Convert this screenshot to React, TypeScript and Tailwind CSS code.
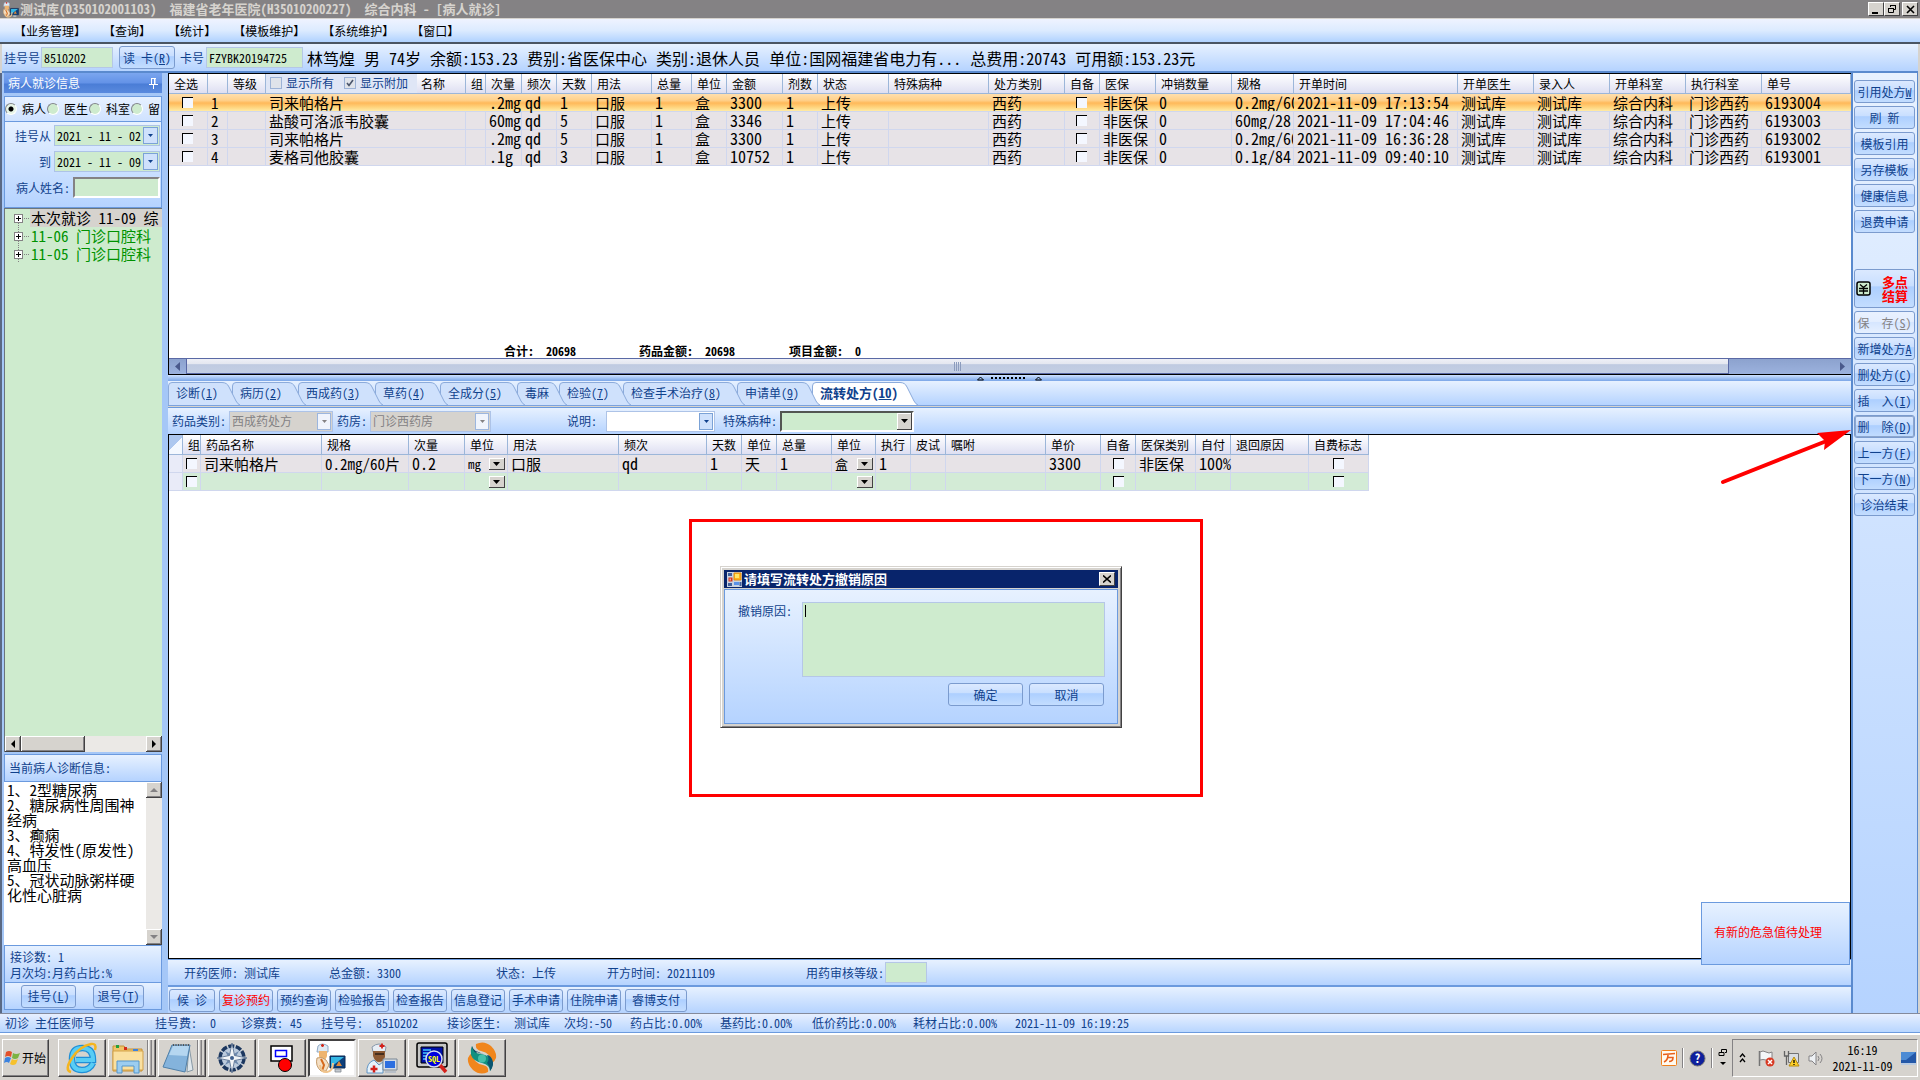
import type { ReactNode } from "react";

interface Column {
  label: string;
  width: number;
  wide?: boolean;
}

interface Tab {
  label: string;
  hotkey?: string;
  width: number;
}

const menus = ["业务管理", "查询", "统计", "模板维护", "系统维护", "窗口"];

const patientInfo = [
  "林笃煌",
  "男",
  "74岁",
  "余额:153.23",
  "费别:省医保中心",
  "类别:退休人员",
  "单位:国网福建省电力有...",
  "总费用:20743",
  "可用额:153.23元",
];

const orderColumns: Column[] = [
  { label: "全选", width: 39 },
  { label: "", width: 20 },
  { label: "等级", width: 38 },
  { label: "名称", width: 200 },
  { label: "组", width: 20 },
  { label: "次量", width: 36, wide: true },
  { label: "频次", width: 35, wide: true },
  { label: "天数", width: 35, wide: true },
  { label: "用法", width: 60 },
  { label: "总量", width: 40, wide: true },
  { label: "单位", width: 35 },
  { label: "金额", width: 56, wide: true },
  { label: "剂数", width: 35, wide: true },
  { label: "状态", width: 71 },
  { label: "特殊病种", width: 100 },
  { label: "处方类别", width: 76 },
  { label: "自备", width: 35 },
  { label: "医保", width: 56 },
  { label: "冲销数量", width: 76, wide: true },
  { label: "规格", width: 62, wide: true },
  { label: "开单时间", width: 164, wide: true },
  { label: "开单医生", width: 76 },
  { label: "录入人", width: 76 },
  { label: "开单科室", width: 76 },
  { label: "执行科室", width: 76 },
  { label: "单号", width: 0, wide: true },
];

const orders = [
  { name: "司来帕格片", dose: ".2mg", days: "1", amount: "3300", spec: "0.2mg/60片", time: "2021-11-09 17:13:54", no: "6193004" },
  { name: "盐酸可洛派韦胶囊", dose: "60mg", days: "5", amount: "3346", spec: "60mg/28", time: "2021-11-09 17:04:46", no: "6193003" },
  { name: "司来帕格片", dose: ".2mg", days: "5", amount: "3300", spec: "0.2mg/60片", time: "2021-11-09 16:36:28", no: "6193002" },
  { name: "麦格司他胶囊", dose: ".1g", days: "3", amount: "10752", spec: "0.1g/84", time: "2021-11-09 09:40:10", no: "6193001" },
];

const tabs: Tab[] = [
  { label: "诊断", hotkey: "1", width: 64 },
  { label: "病历", hotkey: "2", width: 66 },
  { label: "西成药", hotkey: "3", width: 77 },
  { label: "草药", hotkey: "4", width: 65 },
  { label: "全成分", hotkey: "5", width: 77 },
  { label: "毒麻", width: 42 },
  { label: "检验", hotkey: "7", width: 64 },
  { label: "检查手术治疗", hotkey: "8", width: 114 },
  { label: "申请单", hotkey: "9", width: 75 },
  { label: "流转处方", hotkey: "10", width: 98 },
];

const detailColumns: Column[] = [
  { label: "", width: 14 },
  { label: "组", width: 18 },
  { label: "药品名称", width: 121 },
  { label: "规格", width: 87 },
  { label: "次量", width: 56, wide: true },
  { label: "单位", width: 43 },
  { label: "用法", width: 111 },
  { label: "频次", width: 88, wide: true },
  { label: "天数", width: 35, wide: true },
  { label: "单位", width: 35 },
  { label: "总量", width: 55, wide: true },
  { label: "单位", width: 44 },
  { label: "执行", width: 35, wide: true },
  { label: "皮试", width: 35 },
  { label: "嘱咐", width: 100 },
  { label: "单价", width: 55, wide: true },
  { label: "自备", width: 35 },
  { label: "医保类别", width: 60 },
  { label: "自付", width: 35, wide: true },
  { label: "退回原因", width: 78 },
  { label: "自费标志", width: 60 },
];

const diagnoses = [
  "1、2型糖尿病",
  "2、糖尿病性周围神经病",
  "3、癫痫",
  "4、特发性(原发性)高血压",
  "5、冠状动脉粥样硬化性心脏病",
];

const gloss =
  "border border-[#7b9bce] rounded-[3px] text-[#10418c] whitespace-nowrap bg-[linear-gradient(#dbe9ff,#c9dfff_42%,#adcfff_46%,#c3ddff)]";
const panel = "bg-gradient-to-b from-[#e7f1ff] to-[#b5d3ff]";

function HotLabel({ text, hotkey }: { text: string; hotkey?: string }) {
  return (
    <>
      {text}
      {hotkey && (
        <>
          (<u>{hotkey}</u>)
        </>
      )}
    </>
  );
}

function Check({ label }: { label: string }) {
  return (
    <input
      type="checkbox"
      aria-label={label}
      className="block appearance-none w-[11px] h-[11px] bg-[#f4f7ff] border-t border-l border-black"
    />
  );
}

function Combo({
  label,
  value = "",
  className,
  disabled = false,
}: {
  label: string;
  value?: string;
  className: string;
  disabled?: boolean;
}) {
  return (
    <label className="flex items-center gap-[3px]">
      <span className="whitespace-nowrap">{label}</span>
      <span className={`relative flex border border-[#adc3e7] h-[21px] ${className}`}>
        <select
          disabled={disabled}
          className="appearance-none w-full h-full pl-[2px] leading-[18px] opacity-100"
        >
          <option>{value}</option>
        </select>
        <span
          className={`absolute right-px top-px bottom-px w-[14px] border flex items-center justify-center pointer-events-none ${
            disabled ? "border-[#9cb6de] bg-[#f0f4fc]" : "border-[#7ba2d6] bg-[#cfe1fc]"
          }`}
        >
          <svg width="5" height="3" viewBox="0 0 5 3">
            <path d="M0 0h5L2.500 3z" fill={disabled ? "#848284" : "#10418c"} />
          </svg>
        </span>
      </span>
    </label>
  );
}

function UnitSelect({ label, value = "" }: { label: string; value?: string }) {
  return (
    <span className="relative block h-[17px]">
      <select aria-label={label} className="appearance-none block w-full h-full pl-[3px] text-[13px] leading-[17px]">
        <option>{value}</option>
      </select>
      <span className="absolute right-[2px] top-[3px] w-4 h-3 bg-[#d6d3ce] border-r border-b border-[#424142] shadow-[inset_1px_1px_0_#fff] flex items-center justify-center pointer-events-none">
        <svg width="7" height="4" viewBox="0 0 7 4">
          <path d="M0 0h7L3.500 4z" fill="#000" />
        </svg>
      </span>
    </span>
  );
}

function DateField({ id, label, value }: { id: string; label: string; value: string }) {
  return (
    <div className="flex items-center justify-end gap-[3px]">
      <label htmlFor={id}>{label}</label>
      <div className="flex w-[106px] h-[21px] border border-[#adc3e7] bg-[#ceebce]">
        <input id={id} defaultValue={value} className="w-full min-w-0 pl-[2px] text-black" />
        <button
          aria-label={`${label}日历`}
          className="w-[15px] shrink-0 m-px border border-[#7ba2d6] bg-[#cfe1fc] flex items-center justify-center"
        >
          <svg width="5" height="3" viewBox="0 0 5 3">
            <path d="M0 0h5L2.500 3z" fill="#10418c" />
          </svg>
        </button>
      </div>
    </div>
  );
}

function ScrollButton({ label, d, dim = false }: { label: string; d: string; dim?: boolean }) {
  return (
    <button
      aria-label={label}
      className="w-4 h-4 shrink-0 bg-[#d6d3ce] border-r border-b border-[#424142] shadow-[inset_1px_1px_0_#fff,inset_-1px_-1px_0_#848284] flex items-center justify-center"
    >
      <svg width="8" height="8" viewBox="0 0 8 8">
        <path d={d} fill={dim ? "#848284" : "#000"} />
      </svg>
    </button>
  );
}

function TitleBar() {
  const btn =
    "w-4 h-[14px] bg-[#d6d3ce] border border-t-white border-l-white border-r-[#424142] border-b-[#424142] flex items-center justify-center";
  return (
    <header className="h-[18px] shrink-0 bg-[#848284] flex items-center pl-[2px] pr-[2px] text-[#d6d3ce] text-[13px] font-bold whitespace-pre">
      <DoctorIcon size={17} />
      <h1 className="pl-px flex-1">
        {"测试库(D350102001103)  福建省老年医院(H35010200227)  综合内科 - [病人就诊]"}
      </h1>
      <button aria-label="最小化" className={btn}>
        <svg width="10" height="9" viewBox="0 0 10 9">
          <path d="M1 7h6v2H1z" />
        </svg>
      </button>
      <button aria-label="还原" className={btn}>
        <svg width="10" height="10" viewBox="0 0 10 10" fill="none" stroke="#000">
          <path d="M3.500 3V1.500h5v4H7M3 1.500h6" />
          <path d="M1.500 4.500h5v4h-5zM1 4.500h6" />
        </svg>
      </button>
      <button aria-label="关闭" className={`ml-[2px] ${btn}`}>
        <svg width="9" height="9" viewBox="0 0 9 9" stroke="#000" strokeWidth="1.600">
          <path d="M1 1l7 7M8 1L1 8" />
        </svg>
      </button>
    </header>
  );
}

function MenuBar() {
  return (
    <nav className="h-[26px] shrink-0 flex items-center gap-[17px] pl-[14px] border-t border-[#d6d3ce] border-b-2 border-b-[#4a5563] bg-gradient-to-b from-[#eff3ff] via-[#dcebff] to-[#b0d2ff]">
      {menus.map((m) => (
        <button key={m}>【{m}】</button>
      ))}
    </nav>
  );
}

function PatientBar() {
  return (
    <div className={`h-[29px] shrink-0 ml-[2px] mr-[2px] flex items-center pl-[2px] border-b-2 border-[#5a8ace] text-[#10418c] ${panel}`}>
      <label className="flex items-center gap-px">
        挂号号
        <input
          defaultValue="8510202"
          className="w-[72px] h-[21px] pl-[2px] bg-[#ceebce] border border-[#b5c7e7] text-black"
        />
      </label>
      <button className={`ml-[6px] w-[56px] h-[23px] ${gloss}`}>
        <HotLabel text="读 卡" hotkey="R" />
      </button>
      <label className="flex items-center gap-[2px] ml-[5px]">
        卡号
        <input
          defaultValue="FZYBK20194725"
          className="w-[97px] h-[21px] pl-[2px] bg-[#ceebce] border border-[#b5c7e7] text-black"
        />
      </label>
      <div className="flex gap-[9px] ml-1 text-black text-[16px] whitespace-nowrap">
        {patientInfo.map((t) => (
          <span key={t}>{t}</span>
        ))}
      </div>
    </div>
  );
}

function Sidebar() {
  const visits = ["本次就诊 11-09 综", "11-06 门诊口腔科", "11-05 门诊口腔科"];
  return (
    <aside className="w-[168px] shrink-0 flex flex-col pl-[2px] pr-[6px] bg-[#a5c7f7] border-l-2 border-[#5a6984] text-[#10418c]">
      <h2 className="h-5 shrink-0 flex items-center justify-between px-1 text-white bg-[linear-gradient(#7ba6ef,#6392e7_50%,#4a7dd6_55%,#5a8ade)]">
        病人就诊信息
        <svg width="9" height="11" viewBox="0 0 9 11" fill="none" stroke="#fff">
          <path d="M2.500 0v6M6 0v6M2 .5h5M0 6.500h9M4.500 7v4M5.500 0v6" />
        </svg>
      </h2>

      <div className="mt-[3px] h-[26px] shrink-0 overflow-hidden flex items-center border border-[#6b9ade] bg-gradient-to-b from-[#e7f1ff] to-[#cfe2ff] text-black">
        {["病人", "医生", "科室", "留"].map((t, i) => (
          <label key={t} className="w-[42px] shrink-0 flex items-center gap-[5px] whitespace-nowrap">
            <input
              type="radio"
              name="scope"
              defaultChecked={i === 0}
              className="appearance-none w-3 h-3 shrink-0 rounded-full bg-[#ceebce] border border-[#84868c] border-r-white border-b-white checked:bg-[radial-gradient(#000_2px,#e7f5e7_3px)]"
            />
            {t}
          </label>
        ))}
      </div>

      <div className={`h-[86px] shrink-0 flex flex-col gap-[5px] pt-[3px] pr-px border border-t-0 border-[#6b9ade] ${panel}`}>
        <DateField id="from" label="挂号从" value="2021 - 11 - 02" />
        <DateField id="to" label="到" value="2021 - 11 - 09" />
        <label className="flex items-center justify-end gap-[3px]">
          病人姓名:
          <input className="w-[87px] h-[21px] bg-[#ceebce] border-2 border-[#848284] border-r-white border-b-white" />
        </label>
      </div>

      <div className="flex-1 min-h-0 flex flex-col overflow-hidden bg-[#ceebce] border-t border-l border-[#6b757b]">
        <ul className="flex-1 text-[15px] leading-[18px] whitespace-nowrap">
          {visits.map((v, i) => (
            <li key={v} className="flex items-center pl-[9px]">
              <button aria-label="展开" className="shrink-0">
                <svg width="16" height="18" viewBox="0 0 16 18" fill="none" shapeRendering="crispEdges">
                  <path
                    d={i === 0 ? "M4.500 14v4M10 9.500h6" : "M4.500 0v5M4.500 14v4M10 9.500h6"}
                    stroke="#848284"
                    strokeDasharray="1 1"
                  />
                  <path d="M.5 5.500h8v8h-8z" fill="#fff" stroke="#848284" />
                  <path d="M2 9.500h5M4.500 7v5" stroke="#000" />
                </svg>
              </button>
              <span className={i === 0 ? "flex-1 bg-[#d6d3ce] text-black pl-px" : "text-[#009200] pl-px"}>{v}</span>
            </li>
          ))}
        </ul>
        <div className="flex h-4 bg-[#ebe9e6]">
          <ScrollButton label="向左" d="M6 0v8L2 4z" />
          <div className="w-16 bg-[#d6d3ce] border-r border-b border-[#424142] shadow-[inset_1px_1px_0_#fff,inset_-1px_-1px_0_#848284]" />
          <div className="flex-1" />
          <ScrollButton label="向右" d="M2 0v8l4-4z" />
        </div>
      </div>

      <h3 className={`mt-[2px] h-[28px] shrink-0 flex items-center pl-1 border border-[#6b9ade] ${panel}`}>
        当前病人诊断信息:
      </h3>
      <div className="h-[163px] shrink-0 flex bg-white text-black">
        <div className="flex-1 pl-[3px] pr-1 text-[15px] leading-[15px] break-all">
          {diagnoses.map((d) => (
            <p key={d}>{d}</p>
          ))}
        </div>
        <div className="w-4 flex flex-col justify-between bg-[#ebe9e6]">
          <ScrollButton label="向上" d="M0 6h8L4 2z" dim />
          <ScrollButton label="向下" d="M0 2h8L4 6z" dim />
        </div>
      </div>
      <div className={`h-[38px] shrink-0 pl-[5px] pt-[3px] leading-4 border border-[#6b9ade] ${panel}`}>
        <p>接诊数: 1</p>
        <p>月次均:月药占比:%</p>
      </div>
      <div className={`h-[27px] mb-[3px] shrink-0 flex items-center pl-4 gap-[17px] border border-t-0 border-[#6b9ade] ${panel}`}>
        <button className={`w-[55px] h-[23px] ${gloss}`}>
          <HotLabel text="挂号" hotkey="L" />
        </button>
        <button className={`w-[51px] h-[23px] ${gloss}`}>
          <HotLabel text="退号" hotkey="T" />
        </button>
      </div>
    </aside>
  );
}

const headCell =
  "p-0 font-normal text-left border-r border-b border-[#9cb6d9] bg-gradient-to-b from-white to-[#dedff2] whitespace-nowrap";

function OrderGrid() {
  return (
    <section className="h-[302px] shrink-0 flex flex-col bg-white border-t border-b border-l border-black">
      <table className="w-full table-fixed border-separate border-spacing-0">
        <colgroup>
          {orderColumns.map((c, i) => (
            <col key={i} style={c.width ? { width: c.width } : undefined} />
          ))}
        </colgroup>
        <thead>
          <tr className="h-5">
            {orderColumns.map((c, i) => (
              <th key={i} className={c.label === "名称" ? headCell : `${headCell} pl-[5px]`}>
                {c.label === "名称" ? (
                  <div className="flex items-center">
                    <div className="flex items-start w-[151px] h-[19px] pl-1 gap-[10px] bg-[#dfe6f6] text-[#10418c]">
                      {["显示所有", "显示附加"].map((t, k) => (
                        <label key={t} className="relative flex items-center gap-[4px] leading-[17px]">
                          <input
                            type="checkbox"
                            defaultChecked={k === 1}
                            className="appearance-none w-3 h-3 border border-[#9cb2d6] bg-[#dfe3ea]"
                          />
                          {k === 1 && (
                            <svg
                              className="absolute left-[2px] top-[5px] pointer-events-none"
                              width="8"
                              height="8"
                              viewBox="0 0 8 8"
                              fill="none"
                            >
                              <path d="M1 4l2 2.500L7 1" stroke="#4a556b" strokeWidth="1.600" />
                            </svg>
                          )}
                          {t}
                        </label>
                      ))}
                    </div>
                    <span className="pl-[4px]">{c.label}</span>
                  </div>
                ) : (
                  c.label
                )}
              </th>
            ))}
          </tr>
        </thead>
        <tbody>
          {orders.map((o, r) => {
            const cells: ReactNode[] = [
              <Check label={`选择${r + 1}`} />,
              r + 1,
              "",
              o.name,
              "",
              o.dose,
              "qd",
              o.days,
              "口服",
              "1",
              "盒",
              o.amount,
              "1",
              "上传",
              "",
              "西药",
              <Check label={`自备${r + 1}`} />,
              "非医保",
              "0",
              o.spec,
              o.time,
              "测试库",
              "测试库",
              "综合内科",
              "门诊西药",
              o.no,
            ];
            return (
              <tr
                key={o.no}
                className={`h-[18px] ${
                  r === 0
                    ? "bg-[linear-gradient(#ffdfae,#ffd08a_35%,#ffb95a_50%,#ffd680_75%,#fff0b0)]"
                    : "bg-[#e7e3e7]"
                }`}
              >
                {cells.map((cell, i) => (
                  <td
                    key={i}
                    className={`p-0 leading-[17px] border-b border-[#d0d7ee] whitespace-nowrap ${
                      r === 0 ? "" : "border-r"
                    } ${i === 0 ? "pl-[13px]" : i === 16 ? "pl-[11px]" : "pl-[3px]"} ${
                      orderColumns[i].wide ? "text-[16px]" : "text-[15px]"
                    } ${i === 19 ? "overflow-hidden" : ""}`}
                  >
                    {cell}
                  </td>
                ))}
              </tr>
            );
          })}
        </tbody>
      </table>

      <div className="flex-1" />
      <div className="flex pl-[335px] font-bold leading-[14px] whitespace-pre">
        <span className="w-[135px]">合计:  20698</span>
        <span className="w-[150px]">药品金额:  20698</span>
        <span>项目金额:  0</span>
      </div>
      <div className="h-4 flex bg-gradient-to-b from-[#8ca2ce] to-[#9cb2de] border-t border-[#5a69a5]">
        <button aria-label="向左滚动" className="w-[17px] flex items-center justify-center">
          <svg width="5" height="9" viewBox="0 0 5 9">
            <path d="M5 0v9L0 4.500z" fill="#4a598c" />
          </svg>
        </button>
        <div className="flex-1 flex items-center justify-center border border-t-0 border-[#5a69a5] bg-[linear-gradient(#eff0f6,#e4e7f0_35%,#c0cbe1_40%,#c3cee3)]">
          <svg width="8" height="9" viewBox="0 0 8 9" stroke="#8c9cbd">
            <path d="M.5 0v9M2.500 0v9M4.500 0v9M6.500 0v9" />
          </svg>
        </div>
        <button aria-label="向右滚动" className="w-[122px] flex items-center justify-end pr-[6px]">
          <svg width="5" height="9" viewBox="0 0 5 9">
            <path d="M0 0v9l5-4.500z" fill="#4a598c" />
          </svg>
        </button>
      </div>
    </section>
  );
}

function TabStrip() {
  return (
    <>
      <div className="h-[6px] shrink-0 flex items-center justify-center bg-gradient-to-b from-[#cfe2ff] to-[#7ba6e7]">
        <svg width="66" height="5" viewBox="0 0 66 5">
          <path d="M3.500 1l3 3h-6zM61.500 1l3 3h-6z" fill="none" stroke="#000" />
          <path d="M14 2h36" stroke="#000" strokeWidth="2" strokeDasharray="2 2" />
        </svg>
      </div>
      <div role="tablist" className={`h-[25px] shrink-0 flex border-b border-[#7ba2de] ${panel}`}>
        {tabs.map((t, i) => {
          const active = i === tabs.length - 1;
          const w = t.width;
          return (
            <button
              key={t.label}
              role="tab"
              aria-selected={active}
              className={`relative h-6 text-left pl-2 whitespace-nowrap text-[#10418c] ${
                active ? "font-bold text-[13px]" : ""
              }`}
              style={{ width: w, zIndex: tabs.length - i }}
            >
              <svg className="absolute left-0 top-0 overflow-visible" width={w} height="24" fill={active ? "#fff" : "#cfe1fc"}>
                <path
                  d={`M.5 24V5Q.5 1.500 4 1.500H${w - 10}Q${w - 5} 1.500 ${w - 3} 6L${w + 4} 20Q${w + 6} 23.500 ${w + 8} 24`}
                  stroke="#8cabdb"
                />
              </svg>
              <span className="relative">
                <HotLabel text={t.label} hotkey={t.hotkey} />
              </span>
            </button>
          );
        })}
      </div>
      <div className={`h-[27px] shrink-0 flex items-center mt-px pl-1 border-t border-[#6b9ade] text-[#10418c] ${panel}`}>
        <Combo label="药品类别:" value="西成药处方" className="w-[104px] bg-[#d6d3ce] text-[#848284]" disabled />
        <div className="w-1" />
        <Combo label="药房:" value="门诊西药房" className="w-[121px] bg-[#d6d3ce] text-[#848284]" disabled />
        <div className="w-[76px]" />
        <Combo label="说明:" className="ml-[6px] w-[109px] bg-white" />
        <label className="flex items-center gap-[3px] ml-2">
          特殊病种:
          <span className="relative block w-[134px] h-[21px] bg-[#ceebce] border-2 border-[#525552] border-r-white border-b-white">
            <select className="appearance-none block w-full h-full">
              <option></option>
            </select>
            <span className="absolute right-0 top-0 bottom-0 w-[15px] bg-[#d6d3ce] border-r border-b border-[#424142] shadow-[inset_1px_1px_0_#fff] flex items-center justify-center pointer-events-none">
              <svg width="7" height="4" viewBox="0 0 7 4">
                <path d="M0 0h7L3.500 4z" fill="#000" />
              </svg>
            </span>
          </span>
        </label>
      </div>
    </>
  );
}

function DetailGrid() {
  const rows: ReactNode[][] = [
    [
      "",
      <Check label="组1" />,
      "司来帕格片",
      "0.2mg/60片",
      "0.2",
      <UnitSelect label="次量单位1" value="mg" />,
      "口服",
      "qd",
      "1",
      "天",
      "1",
      <UnitSelect label="总量单位1" value="盒" />,
      "1",
      "",
      "",
      "3300",
      <Check label="自备1" />,
      "非医保",
      "100%",
      "",
      <Check label="自费1" />,
    ],
    detailColumns.map((_, i) => {
      if (i === 1) return <Check label="组2" />;
      if (i === 5) return <UnitSelect label="次量单位2" />;
      if (i === 11) return <UnitSelect label="总量单位2" />;
      if (i === 16) return <Check label="自备2" />;
      if (i === 20) return <Check label="自费2" />;
      return "";
    }),
  ];
  return (
    <table className="w-[1200px] table-fixed border-separate border-spacing-0">
      <colgroup>
        {detailColumns.map((c, i) => (
          <col key={i} style={{ width: c.width }} />
        ))}
      </colgroup>
      <thead>
        <tr className="h-5">
          {detailColumns.map((c, i) => (
            <th
              key={i}
              className={
                i === 0
                  ? "border-r border-b border-[#9cb6d9] bg-[linear-gradient(135deg,#adc7ef_50%,#f4f8ff_50%)]"
                  : `${headCell} pl-[5px]`
              }
            >
              {c.label}
            </th>
          ))}
        </tr>
      </thead>
      <tbody>
        {rows.map((row, r) => (
          <tr key={r} className={`h-[18px] ${r === 0 ? "bg-[#e7e3e7]" : "bg-[#d3ebd6]"}`}>
            {row.map((cell, i) => (
              <td
                key={i}
                className={`p-0 leading-[17px] border-r border-b border-[#d0d7ee] whitespace-nowrap ${
                  i === 0 ? "bg-[#e9ebf8]" : ""
                } ${
                  i === 16 ? "pl-[12px]" : i === 20 ? "pl-[24px]" : i === 5 || i === 11 ? "" : "pl-[3px]"
                } ${detailColumns[i].wide ? "text-[16px]" : "text-[15px]"}`}
              >
                {cell}
              </td>
            ))}
          </tr>
        ))}
      </tbody>
    </table>
  );
}

function CancelDialog() {
  return (
    <div className="absolute left-[520px] top-[84px] w-[514px] h-[278px] border-3 border-[#ff0000] pl-[28px] pt-[44px]">
      <div
        role="dialog"
        aria-label="请填写流转处方撤销原因"
        className="w-[402px] h-[162px] flex flex-col p-[3px] bg-[#d6d3ce] border border-[#d6d3ce] border-r-[#424142] border-b-[#424142] shadow-[inset_1px_1px_0_#fff,inset_-1px_-1px_0_#848284]"
      >
        <div className="h-[18px] flex items-center px-[3px] bg-[#08246b] text-white font-bold text-[13px]">
          <svg width="15" height="15" viewBox="0 0 15 15" className="mr-[2px]">
            <path d="M0 0h15v15H0z" fill="#c9d3e2" />
            <path d="M1 1h4v3H1zM1 11h4v3H1zM12.500 10h2v4h-2z" fill="#425f9a" />
            <path d="M7 1h7v7H7z" fill="#ffb21a" stroke="#e08a10" />
            <path d="M8 2h4v4H8z" fill="#ffe566" />
            <path d="M1.500 5.500h4v4h-4z" fill="#d6331a" />
            <path d="M2.500 6.500h1.500v2H2.500z" fill="#f6a08e" />
            <path d="M7 10h5v3H7z" fill="#5a92e8" />
          </svg>
          <span className="flex-1">请填写流转处方撤销原因</span>
          <button
            aria-label="关闭对话框"
            className="w-4 h-[14px] bg-[#d6d3ce] border border-t-white border-l-white border-r-[#424142] border-b-[#424142] flex items-center justify-center"
          >
            <svg width="8" height="8" viewBox="0 0 8 8" stroke="#000" strokeWidth="1.600">
              <path d="M0 .5l8 7M8 .5l-8 7" />
            </svg>
          </button>
        </div>
        <div className={`mt-px flex-1 border border-[#6b9ade] text-[#10418c] pl-[13px] pr-3 pt-[12px] ${panel}`}>
          <label className="relative flex items-start justify-between">
            撤销原因:
            <textarea className="w-[303px] h-[75px] resize-none outline-none px-[2px] bg-[#ceebce] border border-[#b5c7e7] text-black" />
            <span className="absolute right-[299px] top-[3px] w-px h-3 bg-black pointer-events-none" />
          </label>
          <div className="flex justify-end gap-[6px] mt-[6px] pr-px">
            <button className={`w-[75px] h-[23px] leading-5 ${gloss}`}>确定</button>
            <button className={`w-[75px] h-[23px] leading-5 ${gloss}`}>取消</button>
          </div>
        </div>
      </div>
    </div>
  );
}

function Footer() {
  const info = [
    { text: "开药医师: 测试库", width: "w-[145px]" },
    { text: "总金额: 3300", width: "w-[167px]" },
    { text: "状态: 上传", width: "w-[111px]" },
    { text: "开方时间: 20211109", width: "w-[199px]" },
  ];
  const actions = ["预约查询", "检验报告", "检查报告", "信息登记", "手术申请", "住院申请"];
  return (
    <>
      <div className={`h-[28px] shrink-0 flex items-center pl-4 border-t border-b-2 border-[#6b9ade] text-[#10418c] ${panel}`}>
        {info.map((i) => (
          <span key={i.text} className={i.width}>
            {i.text}
          </span>
        ))}
        <label className="flex items-center gap-px">
          用药审核等级:
          <input className="w-[42px] h-[21px] bg-[#ceebce] border border-[#b5c7e7]" />
        </label>
      </div>
      <div className={`h-[26px] shrink-0 flex items-center gap-[4px] pl-px ${panel}`}>
        <button className={`w-[46px] h-[23px] ${gloss}`}>候 诊</button>
        <button className={`w-[54px] h-[23px] ${gloss}`}>
          <span className="text-[#ff0000]">复诊预约</span>
        </button>
        {actions.map((a) => (
          <button key={a} className={`w-[54px] h-[23px] ${gloss}`}>
            {a}
          </button>
        ))}
        <button className={`w-[62px] h-[23px] ${gloss}`}>睿博支付</button>
      </div>
    </>
  );
}

function ActionColumn() {
  const top = [
    { text: "引用处方", last: "W" },
    { text: "刷 新" },
    { text: "模板引用" },
    { text: "另存模板" },
    { text: "健康信息" },
    { text: "退费申请" },
  ];
  const bottom = [
    { text: "新增处方", last: "A" },
    { text: "删处方", hotkey: "C" },
    { text: "插  入", hotkey: "I" },
    { text: "删  除", hotkey: "D" },
    { text: "上一方", hotkey: "F" },
    { text: "下一方", hotkey: "N" },
    { text: "诊治结束" },
  ];
  return (
    <div className={`w-[67px] shrink-0 flex flex-col items-start gap-[3px] pt-[7px] pl-px border-l-2 border-r border-[#5a8ace] whitespace-pre ${panel}`}>
      {top.map((b) => (
        <button key={b.text} className={`w-[61px] h-[23px] px-0 leading-5 ${gloss}`}>
          {b.text}
          {b.last && <u>{b.last}</u>}
        </button>
      ))}
      <button className={`w-[61px] h-[39px] mt-[33px] flex items-center justify-between pl-px pr-[6px] ${gloss}`}>
        <svg width="16" height="16" viewBox="0 0 16 16" fill="none" stroke="#000">
          <rect x="1" y="1" width="13" height="13" rx="2" fill="#ceebce" strokeWidth="1.500" />
          <path d="M4 3.500l3.500 3 3.500-3M3 7.500h9M3 10h9M7.500 6v7" strokeWidth="1.300" />
        </svg>
        <span className="w-[26px] text-[#ff0000] font-bold text-[13px] leading-[14px]">
          多点
          <br />
          结算
        </span>
      </button>
      <button
        disabled
        className="w-[61px] h-[23px] leading-5 rounded-[3px] border border-[#7b9bce] bg-[linear-gradient(#e9f1ff,#e4eeff_45%,#d6e6ff_50%,#e6f0ff)] text-[#848284]"
      >
        <HotLabel text="保  存" hotkey="S" />
      </button>
      {bottom.map((b) => (
        <button
          key={b.text}
          className={`w-[61px] h-[23px] leading-5 ${gloss} ${b.hotkey === "D" ? "shadow-[inset_0_0_0_1px_#8ca6ce]" : ""}`}
        >
          <span className="whitespace-pre">
            <HotLabel text={b.text} hotkey={b.hotkey} />
          </span>
          {b.last && <u>{b.last}</u>}
        </button>
      ))}
    </div>
  );
}

function StatusBar() {
  const items = [
    { text: "初诊", width: "w-[30px]" },
    { text: "主任医师号", width: "w-[120px]" },
    { text: "挂号费:", width: "w-[55px]" },
    { text: "0", width: "w-[31px]" },
    { text: "诊察费:", width: "w-[49px]" },
    { text: "45", width: "w-[31px]" },
    { text: "挂号号:", width: "w-[55px]" },
    { text: "8510202", width: "w-[71px]" },
    { text: "接诊医生:", width: "w-[67px]" },
    { text: "测试库", width: "w-[50px]" },
    { text: "次均:-50", width: "w-[66px]" },
    { text: "药占比:0.00%", width: "w-[90px]" },
    { text: "基药比:0.00%", width: "w-[92px]" },
    { text: "低价药比:0.00%", width: "w-[101px]" },
    { text: "耗材占比:0.00%", width: "w-[102px]" },
    { text: "2021-11-09 16:19:25", width: "" },
  ];
  return (
    <div className="h-5 shrink-0 flex items-center pl-[5px] border-t border-[#848a9c] border-b border-b-[#6b9ade] text-[#10418c] whitespace-nowrap bg-gradient-to-b from-[#e7efff] to-[#b8d6ff]">
      {items.map((s, i) => (
        <span key={i} className={s.width}>
          {s.text}
        </span>
      ))}
    </div>
  );
}

function DoctorIcon({ size }: { size: number }) {
  return (
    <svg width={size} height={size} viewBox="0 0 32 32">
      <path d="M16 14h15v12H16z" fill="#0c3f7c" stroke="#0a2a55" />
      <path d="M17 15h13L17 25z" fill="#35b7e4" />
      <path d="M22 24l3-5 3 5z" fill="#e08a3a" />
      <path d="M21 27h6v3h-6z" fill="#c3c9cf" stroke="#848a92" strokeWidth=".8" />
      <path d="M4 4q4-4 10 0v6H3z" fill="#dfeaf4" stroke="#8fa9c4" />
      <path d="M5 9h8v5q-1 4-4 4t-4-4z" fill="#eeb46f" />
      <path d="M7 3.500h3M8.500 2v3" stroke="#d42a1a" strokeWidth="1.500" />
      <path d="M3 16q5-2 9 2l3 5-3 6H7q-6-5-4-13z" fill="#f4dfc4" stroke="#c49a68" />
      <path d="M7 17l3 6-2 6" fill="none" stroke="#d66a1c" strokeWidth="2" />
      <path d="M6 23q1 8 7 7t6-9" fill="none" stroke="#f0c48c" strokeWidth="2" />
    </svg>
  );
}

function NurseIcon() {
  return (
    <svg width="32" height="32" viewBox="0 0 32 32">
      <path d="M6 5q7-6 14 0l-1 5H7z" fill="#e8eef5" stroke="#8a99ab" />
      <path d="M16 1.500v5M13.500 4h5" stroke="#d4201a" strokeWidth="1.800" />
      <path d="M7 9h12v6q-2 5-6 5t-6-6z" fill="#8c5a34" />
      <path d="M9 12h9" stroke="#2e2017" strokeWidth="1.500" />
      <path d="M1 31q-1-10 7-13l5 5 4-3v11z" fill="#e6f2fb" stroke="#5f94c4" />
      <path d="M8 23.500v7M4.500 27h7" stroke="#d4201a" strokeWidth="2.500" />
      <path d="M17 17h14v11H17z" fill="#d4dce6" stroke="#7b8794" />
      <path d="M19 19h10v7H19z" fill="#2d6fe0" />
      <path d="M19 29h11v2H19z" fill="#b8bfc8" />
    </svg>
  );
}

const taskIcons: { label: string; active?: boolean; stacked?: boolean; icon: ReactNode }[] = [
  {
    label: "浏览器",
    icon: (
      <svg width="32" height="32" viewBox="0 0 32 32" fill="none">
        <path d="M27 21q-3 7-11 7-10 0-10-11T16.500 6Q27 6 27 18H10" stroke="#1f8fd8" strokeWidth="6.500" />
        <path d="M27 21q-3 7-11 7-10 0-10-11T16.500 6Q27 6 27 18H10" stroke="#58cdf5" strokeWidth="4" />
        <path d="M5 30Q-2 28 6 16T25 2q6-1 4 6" stroke="#f5b51e" strokeWidth="2.500" />
      </svg>
    ),
  },
  {
    label: "资源管理器",
    stacked: true,
    icon: (
      <svg width="34" height="32" viewBox="0 0 34 32">
        <path d="M2 4h11l2 3h16v22H2z" fill="#f0c469" stroke="#c48f35" />
        <path d="M2 9h30v19H2z" fill="#fae0a0" stroke="#d3a24b" />
        <path d="M5 3h3v3H5z" fill="#23a03a" />
        <path d="M13 5h3v3h-3z" fill="#d42a1a" />
        <path d="M22 7h5v2h-5z" fill="#3c83df" />
        <path d="M6 31V19h22v12h-5v-7H11v7z" fill="#9ccdf0" stroke="#5496cc" />
      </svg>
    ),
  },
  {
    label: "记事本",
    stacked: true,
    icon: (
      <svg width="34" height="32" viewBox="0 0 34 32">
        <path d="M28 4l4 24-6 2z" fill="#dfe7ec" stroke="#8799a5" />
        <path d="M11 3h18l-5 27L2 25z" fill="#84b3dc" stroke="#4f7fa8" />
        <path d="M12 4h16l-2 10-18-1z" fill="#b5d6f0" />
        <path d="M12 3h17" stroke="#555" strokeWidth="2" strokeDasharray="1 1.500" />
      </svg>
    ),
  },
  {
    label: "罗盘",
    icon: (
      <svg width="30" height="30" viewBox="0 0 30 30">
        <circle cx="15" cy="15" r="12" fill="#bccbdd" stroke="#1c375f" strokeWidth="3.500" strokeDasharray="6 1.500" />
        <path d="M8 8l7 4 7-4-4 7 4 7-7-4-7 4 4-7z" fill="#6c88ad" />
        <path d="M15 0l2.500 12.500L30 15l-12.500 2.500L15 30l-2.500-12.500L0 15l12.500-2.500z" fill="#f2f5f8" stroke="#536a8b" strokeWidth=".8" />
        <circle cx="15" cy="15" r="2" fill="#40608f" />
      </svg>
    ),
  },
  {
    label: "录制",
    icon: (
      <svg width="24" height="28" viewBox="0 0 24 28">
        <path d="M1 2h21v15H1z" fill="#fff" stroke="#000" strokeWidth="1.500" />
        <path d="M5.500 6.500h11v6h-11z" fill="none" stroke="#0000ff" strokeWidth="1.500" />
        <circle cx="15" cy="21" r="6.500" fill="#ff0000" stroke="#000" />
      </svg>
    ),
  },
  { label: "门诊医生站", active: true, icon: <DoctorIcon size={32} /> },
  { label: "护士站", icon: <NurseIcon /> },
  {
    label: "SQL",
    icon: (
      <svg width="32" height="32" viewBox="0 0 32 32">
        <rect x="1" y="1" width="30" height="24" rx="2" fill="#c6c7c6" stroke="#000" strokeWidth="1.500" />
        <path d="M5 5h22v16H5z" fill="#0010a8" stroke="#000" />
        <path d="M7 8h8M7 11h5M7 14h4M7 17h3" stroke="#42c8ff" strokeWidth="1.300" />
        <path d="M23 22l7 8" stroke="#d4201a" strokeWidth="3.500" />
        <circle cx="18" cy="17" r="8" fill="#0000e0" stroke="#d8e0f0" strokeWidth="1.500" />
        <text x="12" y="20" fontSize="8" fontWeight="bold" fill="#ffff00">
          SQL
        </text>
      </svg>
    ),
  },
  {
    label: "同步",
    icon: (
      <svg width="32" height="32" viewBox="0 0 32 32">
        <path d="M10 2q8-4 15 2 6 6 5 12-1 3-4 5Q25 11 15 9 9 8 10 2z" fill="#f0861c" />
        <path d="M22 30q-8 4-15-2-6-6-5-12 1-3 4-5 1 10 11 12 6 1 5 7z" fill="#f0861c" />
        <path d="M6 4q-2 9 4 13 2-5 0-8 6 3 9 3Q8 11 6 4z" fill="#0b4a66" />
        <path d="M6 4q0 7 9 8 9 1 11 8 1 6-2 9 0-6-8-8-9-2-11-8-1-5 1-9z" fill="#13907f" />
        <path d="M24 29q5-6 2-12-2-4-5-4 3 4 0 8 3 3 3 8z" fill="#0b5670" />
        <circle cx="16" cy="16.500" r="4" fill="#46bfa9" />
      </svg>
    ),
  },
];

function Taskbar() {
  const raised =
    "border border-t-white border-l-white border-r-[#424142] border-b-[#424142] shadow-[inset_-1px_-1px_0_#848284]";
  return (
    <footer className="h-[47px] shrink-0 flex items-center pl-[2px] pr-[2px] bg-[#d6d3ce] border-t-2 border-white pt-px">
      <button className={`w-[47px] h-[38px] flex items-center pl-px whitespace-nowrap ${raised}`}>
        <svg width="17" height="16" viewBox="0 0 17 16" className="mr-px shrink-0">
          <path d="M2 2q3-2 6 0L7 7Q4 5 1 7z" fill="#e3502a" />
          <path d="M9 3q3 2 7 0l-2 5q-3 2-6 0z" fill="#7cb342" />
          <path d="M1 8q3-2 6 0l-2 5Q3 11 0 13z" fill="#3c83df" />
          <path d="M8 9q3 2 6 0l-2 5q-3 2-6 0z" fill="#f6c12c" />
        </svg>
        开始
      </button>
      <div className="flex gap-[2px] ml-[9px]">
        {taskIcons.map((t) => (
          <button
            key={t.label}
            aria-label={t.label}
            className={`w-[48px] h-[38px] flex items-center justify-center ${
              t.active
                ? "bg-white border-2 border-[#424142] border-r-[#efefef] border-b-[#efefef] pr-1"
                : raised
            } ${t.stacked ? "pr-2 bg-[linear-gradient(90deg,transparent_38px,#848284_38px,#848284_39px,#fff_39px,#d6d3ce_41px,#848284_42px,#848284_43px,#d6d3ce_43px)]" : ""}`}
          >
            {t.icon}
          </button>
        ))}
      </div>
      <div className="flex-1" />

      <div className="flex items-center gap-[5px] mr-1">
        <svg width="16" height="16" viewBox="0 0 16 16" fill="none">
          <rect x=".5" y=".5" width="15" height="15" rx="1" fill="#fffaf0" stroke="#f0801c" />
          <path d="M2 4.500l12-1M7 5q0 5-4 7M7 7.500h5q0 4-4 4" stroke="#e8601c" strokeWidth="1.600" />
        </svg>
        <div className="h-5 border-l border-[#848284] border-r border-r-white" />
        <svg width="17" height="17" viewBox="0 0 17 17">
          <circle cx="8.500" cy="8.500" r="7.500" fill="#10209c" stroke="#737373" />
          <text x="5.500" y="13" fontSize="12" fontWeight="bold" fill="#fff">
            ?
          </text>
        </svg>
        <div className="h-5 border-l border-[#848284] border-r border-r-white" />
        <svg width="10" height="18" viewBox="0 0 10 18" fill="none" stroke="#000">
          <path d="M3.500 3V.5h5v3H7M1 3.500h5v3H1z" />
          <path d="M2 13h6l-3 3z" fill="#000" stroke="none" />
        </svg>
      </div>
      <div className="h-[38px] w-[186px] flex items-center gap-[8px] pl-[6px] pr-px border border-[#848284] border-r-white border-b-white">
        <svg width="7" height="10" viewBox="0 0 7 10" fill="none" stroke="#000" strokeWidth="1.300">
          <path d="M1 4l2.500-3L6 4M1 9l2.500-3L6 9" />
        </svg>
        <svg width="17" height="17" viewBox="0 0 17 17" className="ml-1">
          <path d="M1.500 1v15" stroke="#737373" strokeWidth="1.500" />
          <path d="M2 2q3-2 6 0t6 0v8q-3 1-6 0t-6 0z" fill="#f4f6f8" stroke="#848284" />
          <circle cx="12" cy="12" r="4.500" fill="#d83a24" />
          <path d="M10 10l4 4M14 10l-4 4" stroke="#fff" strokeWidth="1.500" />
        </svg>
        <svg width="17" height="17" viewBox="0 0 17 17">
          <path d="M5.500 3.500h10v9h-10z" fill="#d9dde2" stroke="#737373" />
          <path d="M1.500 1v5h4V1M3.500 6v9" fill="none" stroke="#636363" strokeWidth="1.300" />
          <path d="M11 7l5 9H6z" fill="#ffd028" stroke="#b58b10" />
          <path d="M11 10v3M11 14v1" stroke="#000" strokeWidth="1.300" />
        </svg>
        <svg width="16" height="15" viewBox="0 0 16 15" fill="none" stroke="#848284">
          <path d="M1 5h3l4-4v13l-4-4H1z" fill="#eef1f4" />
          <path d="M10 5q2 2.500 0 5M12 3q4 4.500 0 9" />
        </svg>
        <div className="flex-1 text-center leading-4">
          <p>16:19</p>
          <p className="whitespace-nowrap">2021-11-09</p>
        </div>
        <svg width="15" height="13" viewBox="0 0 15 13">
          <path d="M0 0h15v13H0z" fill="#2458a8" />
          <path d="M0 0h15L5 8H0z" fill="#4d8bd4" />
          <path d="M0 11h15v2H0z" fill="#b9cbe2" />
        </svg>
      </div>
    </footer>
  );
}

export default function App() {
  return (
    <div className="h-screen overflow-hidden flex flex-col bg-[#d6d3ce] text-black text-[12px] leading-[18px] font-['Noto_Sans_CJK_SC',sans-serif] [font-feature-settings:'hwid']">
      <TitleBar />
      <MenuBar />
      <PatientBar />
      <div className="flex-1 min-h-0 flex mr-[2px]">
        <Sidebar />
        <main className="relative flex-1 min-w-0 flex flex-col">
          <OrderGrid />
          <TabStrip />
          <div className="relative flex-1 min-h-0 bg-white border border-black">
            <DetailGrid />
            <CancelDialog />
            {/* 指向删除按钮的箭头 */}
            <svg className="absolute -right-[2px] -top-[8px] pointer-events-none" width="132" height="60" viewBox="0 0 132 60">
              <path d="M3 55L104 15" stroke="#ff0000" strokeWidth="4" strokeLinecap="round" />
              <path d="M131 3L97 6l8 8-1 9z" fill="#ff0000" />
            </svg>
            <div className={`absolute right-0 -bottom-[7px] w-[149px] h-[63px] z-10 flex items-center pl-3 pb-1 border border-[#6b9ade] text-[#ff0000] ${panel}`}>
              有新的危急值待处理
            </div>
          </div>
          <Footer />
        </main>
        <ActionColumn />
      </div>
      <StatusBar />
      <Taskbar />
    </div>
  );
}
